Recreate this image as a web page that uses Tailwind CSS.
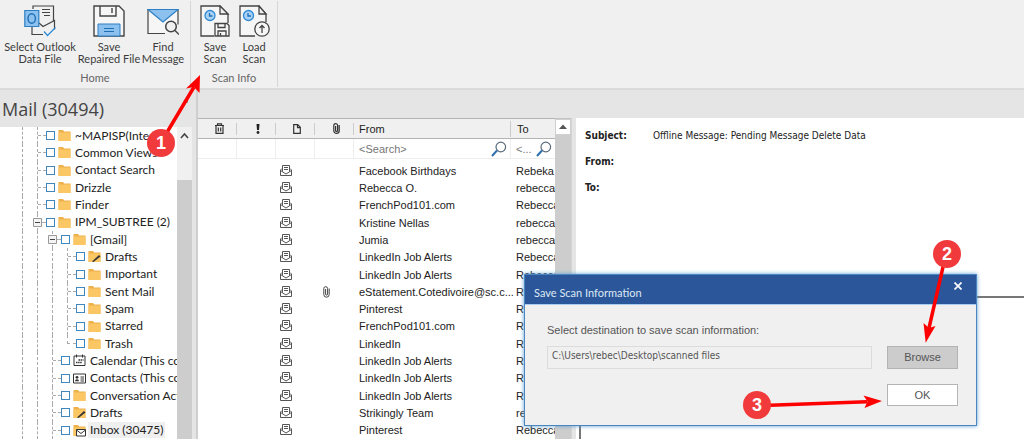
<!DOCTYPE html>
<html lang="en">
<head>
<meta charset="utf-8">
<meta name="viewport" content="width=device-width, initial-scale=1">
<title>Mail repair</title>
<script src="https://cdn.jsdelivr.net/npm/@tailwindcss/browser@4"></script>
</head>
<body class="relative flex h-screen flex-col overflow-hidden bg-[#e5e5e5] font-['Lato','Open_Sans',sans-serif] text-[#222]">

<!-- Ribbon -->
<header class="flex h-[90px] shrink-0 border-b-2 border-[#dadada] bg-[#f0f0f0] text-[11px] leading-3 text-[#3c3c3c]">
  <section class="flex w-[190px] flex-col items-center justify-between pt-[5px] pb-[2px]" aria-label="Home">
    <div class="flex w-full text-center whitespace-nowrap">
      <button class="flex w-[80px] flex-col items-center gap-1">
        <svg class="h-8 w-8" viewBox="0 0 32 32" fill="none" stroke="#444" stroke-width="1.2">
          <path d="M9 4V1h20.500v15M8 22v7.500h11M8 29.500V22" fill="none"/>
          <path d="M18 4.500h8M18 7.500h8M20 10.500h6" />
          <path d="M15 18l4 3.500 11.500-6v9" />
          <path d="M.8 5.500h14v16H.8z" fill="#8cc0ee" stroke="#2f7fc4"/>
          <ellipse cx="7.700" cy="13.500" rx="3.700" ry="4.800" stroke="#1f6fb5" stroke-width="1.400"/>
          <path d="M20 26.500l3.500 4 8-8" stroke="#2f8ad6" stroke-width="1.300"/>
        </svg>
        <span>Select Outlook<br>Data File</span>
      </button>
      <button class="flex w-[58px] flex-col items-center gap-1">
        <svg class="h-8 w-8" viewBox="0 0 32 32" fill="none" stroke="#444" stroke-width="1.400">
          <path d="M1 1h25l5 5v25H1z" fill="#f6f6f6"/>
          <path d="M7 1v10h16V1M19 3v5"/>
          <path d="M5 19h22v12H5z" fill="#8cc0ee" stroke="#2f7fc4" stroke-width="1"/>
          <path d="M11 23.500h10M11 26.500h10" stroke="#1f6fb5" stroke-width="1"/>
        </svg>
        <span>Save<br>Repaired File</span>
      </button>
      <button class="flex w-[50px] flex-col items-center gap-1">
        <svg class="h-8 w-8" viewBox="0 0 32 32" fill="none" stroke="#444" stroke-width="1.200">
          <path d="M18 28.500H1v-24h30v15" fill="#f6f6f6"/>
          <path d="M1 4.500h30L16 17z" fill="#8cc0ee" stroke="#2f7fc4"/>
          <circle cx="24" cy="21.500" r="5.300" fill="#f0f0f0" stroke-width="1.500"/>
          <path d="M28 25.500l4 4" stroke-width="1.500"/>
        </svg>
        <span>Find<br>Message</span>
      </button>
    </div>
    <h2 class="leading-4 text-[#666]">Home</h2>
  </section>
  <section class="my-px flex w-[88px] flex-col items-center justify-between border-x border-[#d6d6d6] pt-1 pb-px" aria-label="Scan Info">
    <div class="flex w-full justify-center text-center">
      <button class="flex w-[40px] flex-col items-center gap-1">
        <svg class="h-8 w-8" viewBox="0 0 32 32" fill="none" stroke="#444" stroke-width="1.300">
          <path d="M15 31H2V1h19l8 8v9" fill="#f6f6f6"/><path d="M21 1v8h8z" fill="#f0f0f0"/>
          <circle cx="11" cy="10.500" r="5" fill="#a9d2f5" stroke="#2f8ad6"/><path d="M10.500 8v3h3" stroke="#1f6fb5"/>
          <path d="M16 18.500h12l2 2V31H16z" fill="#f6f6f6"/><path d="M19 18.500v4h7v-4M19 31v-5h8v5M21.500 28v3"/>
        </svg>
        <span>Save<br>Scan</span>
      </button>
      <button class="flex w-[38px] flex-col items-center gap-1">
        <svg class="h-8 w-8" viewBox="0 0 32 32" fill="none" stroke="#444" stroke-width="1.300">
          <path d="M17 31H2V1h19l7 8v8" fill="#f6f6f6"/><path d="M21 1v8h7z" fill="#f0f0f0"/>
          <circle cx="10.500" cy="10.500" r="5" fill="#a9d2f5" stroke="#2f8ad6"/><path d="M10 8v3h3" stroke="#1f6fb5"/>
          <circle cx="24" cy="24" r="7.200" fill="#f6f6f6"/><path d="M24 28v-7.500M21.500 23l2.500-2.500 2.500 2.500"/>
        </svg>
        <span>Load<br>Scan</span>
      </button>
    </div>
    <h2 class="leading-4 text-[#666]">Scan Info</h2>
  </section>
</header>

<main class="flex min-h-0 flex-1">
  <!-- Folder pane -->
  <aside class="flex w-[198px] shrink-0 flex-col border-r-2 border-[#cfcfcf] pr-1">
    <div class="flex h-[37px] shrink-0 justify-between pr-1 pl-[2px]">
      <h1 class="font-['Open_Sans',sans-serif] text-[18px] leading-[38px] text-[#444]">Mail (30494)</h1>
      <button aria-label="Collapse folder pane" class="self-start pt-2"><svg class="h-[5px] w-[5px]" viewBox="0 0 5 5"><path d="M4.500 0v5L.5 2.500z" fill="#555"/></svg></button>
    </div>
    <div class="flex min-h-0 flex-1 bg-white">
      <ul id="tree" class="flex min-w-0 flex-1 flex-col overflow-hidden pl-[22px] text-[12px] leading-4 whitespace-nowrap"></ul>
      <div class="flex w-[15px] shrink-0 flex-col bg-[#f0f0f0]" aria-hidden="true">
        <svg class="h-[18px] w-full shrink-0" viewBox="0 0 15 18" fill="none" stroke="#444" stroke-width="1.600"><path d="M4 11l3.500-4 3.500 4"/></svg>
        <div class="mt-[35px] flex-1 bg-[#cdcdcd]"></div>
      </div>
    </div>
  </aside>

  <!-- Message list -->
  <section class="flex w-[374px] shrink-0 bg-[#e5e5e5] pt-7 font-['Liberation_Sans',sans-serif] text-[11px] leading-4">
    <table class="flex min-w-0 flex-1 flex-col bg-white text-left">
      <thead class="block shrink-0">
        <tr class="grid h-[21px] grid-cols-[repeat(4,39px)_157px_1fr] items-center border-y border-[#b4b4b4] bg-[#f0f0f0]">
          <th class="flex h-3 items-center justify-center border-r border-[#ccc] pl-1"><svg role="img" aria-label="Deleted" class="h-[11px] w-[11px]" viewBox="0 0 11 11" fill="none" stroke="#333" stroke-width="1.200"><path d="M1 2.500h9M3.500 2.500V.8h4v1.700M2 3v7.300h7V3M4.300 4.500v4M6.700 4.500v4"/></svg></th>
          <th class="flex h-3 items-center justify-center border-r border-[#ccc] pl-1"><svg role="img" aria-label="Importance" class="h-[10px] w-[4px]" viewBox="0 0 4 10" fill="#222"><path d="M.5 0h3L3 6H1z"/><circle cx="2" cy="8.500" r="1.400"/></svg></th>
          <th class="flex h-3 items-center justify-center border-r border-[#ccc] pl-1"><svg role="img" aria-label="Type" class="h-[10px] w-[8px]" viewBox="0 0 8 10" fill="none" stroke="#333" stroke-width="1.200"><path d="M.7.700h4L7.300 3.300v6H.7zM4.500 1v2.700h2.800"/></svg></th>
          <th class="flex h-3 items-center justify-center border-r border-[#ccc] pl-1"><svg role="img" aria-label="Attachment" class="h-[11px] w-[7px]" viewBox="0 0 7 11" fill="none" stroke="#333" stroke-width="1.200"><path d="M6.200 2v5.700a2.700 2.700 0 0 1-5.400 0V2.600a1.900 1.900 0 0 1 3.800 0v4.900a1 1 0 0 1-2 0V3"/></svg></th>
          <th class="h-4 border-r border-[#ccc] pl-[5px] font-normal">From</th>
          <th class="pl-[6px] font-normal">To</th>
        </tr>
        <tr class="grid h-5 grid-cols-[repeat(4,39px)_157px_1fr] border-b border-[#eee] text-[#777]">
          <td class="border-r border-[#eee]"></td><td class="border-r border-[#eee]"></td><td class="border-r border-[#eee]"></td><td class="border-r border-[#eee]"></td>
          <td class="flex items-center justify-between border-r border-[#eee] pr-[3px] pl-[5px]"><input aria-label="Search sender" placeholder="&lt;Search&gt;" class="w-[90px] placeholder-[#777] outline-none"><svg class="h-4 w-4" viewBox="0 0 16 16" fill="none"><circle cx="9.800" cy="6" r="4.800" stroke="#5a6b7c" stroke-width="1.200"/><path d="M6 9.500L1 15" stroke="#2f6fae" stroke-width="2"/></svg></td>
          <td class="flex items-center justify-between pr-[3px] pl-[5px]"><input aria-label="Search recipient" placeholder="&lt;..." class="w-5 placeholder-[#777] outline-none"><svg class="h-4 w-4" viewBox="0 0 16 16" fill="none"><circle cx="9.800" cy="6" r="4.800" stroke="#5a6b7c" stroke-width="1.200"/><path d="M6 9.500L1 15" stroke="#2f6fae" stroke-width="2"/></svg></td>
        </tr>
      </thead>
      <tbody id="mails" class="mt-[3px] flex min-h-0 flex-1 flex-col"></tbody>
    </table>
    <div class="flex w-4 shrink-0 flex-col border-t border-[#c4c4c4] bg-[#cdcdcd]" aria-hidden="true">
      <svg class="h-4 w-4 border border-[#d0d0d0] bg-white" viewBox="0 0 14 14"><path d="M3 9l4-4.500L11 9z" fill="#555"/></svg>
    </div>
    <div class="w-px bg-[#d4d4d4]"></div>
  </section>

  <!-- Message preview -->
  <article class="flex min-w-0 flex-1 flex-col pt-7 pl-1">
    <div class="flex flex-1 flex-col bg-white">
      <dl class="grid h-[178px] shrink-0 grid-cols-[68px_1fr] content-start gap-y-[10px] pt-[10px] pl-[9px] font-['DejaVu_Sans_Condensed','DejaVu_Sans',sans-serif] text-[10px] leading-4">
        <dt class="font-bold">Subject:</dt><dd>Offline Message: Pending Message Delete Data</dd>
        <dt class="font-bold">From:</dt><dd></dd>
        <dt class="font-bold">To:</dt><dd></dd>
      </dl>
      <div class="ml-[3px] flex-1 border-t-2 border-l-2 border-[#777]"></div>
    </div>
  </article>
</main>

<!-- Save dialog -->
<div role="dialog" aria-labelledby="dlg" class="absolute top-[274px] left-[524px] flex h-[152px] w-[453px] flex-col border border-[#4a86c0] bg-[#f0f0f0] font-['Liberation_Sans',sans-serif] text-[11px] text-[#555] shadow-[0_0_4px_#5a9bd4]">
  <div class="flex h-[30px] shrink-0 items-center justify-between border-b border-[#a8cdf0] bg-[#2b579a] pr-[13px] pl-[9px] text-white">
    <h2 id="dlg" class="pt-[6px] font-['Lato','Open_Sans',sans-serif] leading-4 text-[#dfe8f4]">Save Scan Information</h2>
    <button aria-label="Close" class="mb-[7px] p-px"><svg class="h-2 w-2" viewBox="0 0 8 8" stroke="#fff" stroke-width="1.700"><path d="M.5.500l7 7M7.500.500l-7 7"/></svg></button>
  </div>
  <form class="flex flex-col pt-[17px] pr-[18px] pl-[22px]">
    <label for="dest" class="leading-4">Select destination to save scan information:</label>
    <div class="mt-2 flex justify-between">
      <input id="dest" value="C:\Users\rebec\Desktop\scanned files" readonly class="h-[23px] w-[325px] border border-[#dcdcdc] px-1 pb-1 font-['DejaVu_Sans_Condensed','DejaVu_Sans',sans-serif] text-[10px] outline-none">
      <button type="button" class="h-[23px] w-[71px] border border-[#b4b4b4] bg-[#cccccc]">Browse</button>
    </div>
    <button type="button" class="mt-[15px] h-[22px] w-[71px] self-end border border-[#b4b4b4] bg-white">OK</button>
  </form>
</div>

<!-- Step markers -->
<svg class="pointer-events-none absolute top-0 left-0 h-[439px] w-[1024px]" viewBox="0 0 1024 439" fill="#fe0000" stroke="#fe0000">
  <g stroke-width="3.500"><path d="M166 134L194 87M943 267L929 328M770 405.300L867 401.700"/></g>
  <g stroke="none"><path d="M200 75L186 88.500l8-1.500 5.500 6zM925.700 342.700l-2.200-19.700 5.500 5 6.500-2zM882 401l-18.500-5.500 4 6-3 6.500z"/></g>
</svg>
<div class="absolute top-[129px] left-[147px] size-7 rounded-full bg-[#f13a3c] text-center font-['Liberation_Sans',sans-serif] text-[18px] leading-7 font-bold text-white">1</div>
<div class="absolute top-[240px] left-[933px] size-7 rounded-full bg-[#f13a3c] text-center font-['Liberation_Sans',sans-serif] text-[18px] leading-7 font-bold text-white">2</div>
<div class="absolute top-[391px] left-[743px] size-7 rounded-full bg-[#f13a3c] text-center font-['Liberation_Sans',sans-serif] text-[18px] leading-7 font-bold text-white">3</div>

<script>
const base = '<path d="M.5 1h4.500l1.200 1.500h6.300V12H.5z" fill="#eeb04a"/><path d="M.5 3.500h12V12H.5z" fill="#fbc765"/>';
const icons = {
  folder: base,
  draft: base + '<path d="M4 11.500L11 5l1.500 1.500-7 5.500z" fill="#333"/>',
  inbox: base + '<path d="M3.500 5.500h9V12h-9z" fill="#fff" stroke="#333"/><path d="M3.500 6l4.500 3.500L12.500 6" fill="none" stroke="#333"/>',
  cal: '<path d="M1 2h11v9.500H1zM3.500.500v3M9.500.500v3" fill="#fff" stroke="#333"/><path d="M5.500 6h5M3 8.500h6" stroke="#333" stroke-dasharray="1.500 .6" stroke-width="1.400"/>',
  card: '<path d="M.5 2h12v9H.5z" fill="#fff" stroke="#333"/><circle cx="4" cy="5.300" r="1.400" fill="#333"/><path d="M2 9.300a2 2 0 0 1 4 0z" fill="#333"/><path d="M7.500 5H11M7.500 7H11M7.500 9H11" stroke="#333"/>'
};
const tree = [
  [1,'folder','~MAPISP(Inter'],[1,'folder','Common Views'],[1,'folder','Contact Search'],[1,'folder','Drizzle'],[1,'folder','Finder'],
  [1,'folder','IPM_SUBTREE (2)','open'],[2,'folder','[Gmail]','open'],[3,'draft','Drafts'],[3,'folder','Important'],[3,'folder','Sent Mail'],
  [3,'folder','Spam'],[3,'folder','Starred'],[3,'folder','Trash','last'],[2,'cal','Calendar (This co'],[2,'card','Contacts (This co'],
  [2,'folder','Conversation Act'],[2,'draft','Drafts'],[2,'inbox','Inbox (30475)','sel']
];
const guide = '<span class="w-[15px] shrink-0 self-stretch border-l border-dashed border-[#aaa]"></span>';
const box = '<svg class="-ml-[5px] h-[9px] w-[9px] shrink-0" viewBox="0 0 9 9"><path d="M.5.500h8v8h-8z" fill="#f4f4f4" stroke="#999"/><path d="M2 4.500h5" stroke="#444"/></svg>';
document.getElementById('tree').innerHTML = tree.map(([lv, ic, name, st], i) => {
  const line = st === 'last'
    ? '<span class="h-1/2 w-[9px] shrink-0 self-start border-b border-l border-dashed border-[#aaa]"></span>'
    : '<span class="flex w-[9px] shrink-0 items-center self-stretch border-l border-dashed border-[#aaa]">' + (st === 'open' ? box : '') + '<span class="flex-1 border-t border-dashed border-[#aaa]"></span></span>';
  return '<li class="flex min-h-4 flex-1 items-center">' + guide.repeat(lv) + line +
    '<input type="checkbox" id="f' + i + '" class="size-[9px] shrink-0 appearance-none border border-[#3f87bd] bg-white">' +
    '<svg class="ml-[3px] h-[13px] w-[13px] shrink-0" viewBox="0 0 13 13">' + icons[ic] + '</svg>' +
    '<label for="f' + i + '" class="' + (st === 'sel' ? 'ml-[2px] bg-[#efefef] px-[2px]' : 'ml-1') + '">' + name + '</label></li>';
}).join('');

const mails = [
  ['Facebook Birthdays','Rebeka'],['Rebecca O.','rebecca'],['FrenchPod101.com','Rebecca'],['Kristine Nellas','rebecca'],['Jumia','rebecca'],
  ['LinkedIn Job Alerts','Rebecca'],['LinkedIn Job Alerts','Rebecca'],['eStatement.Cotedivoire@sc.c...','Rebecca',1],['Pinterest','Rebecca'],
  ['FrenchPod101.com','Rebecca'],['LinkedIn','Rebecca'],['LinkedIn Job Alerts','Rebecca'],['LinkedIn Job Alerts','Rebecca'],
  ['LinkedIn Job Alerts','Rebecca'],['Strikingly Team','rebecca'],['Pinterest','Rebecca']
];
const env = '<svg class="h-3 w-3" viewBox="0 0 12 12" fill="none" stroke="#555"><path d="M2 3.500L.5 5v5.500h11V5L10 3.500M.5 5.500L6 9l5.500-3.500M2.500 6.500v-6h7v6M4 2.500h4M4 4.500h4"/></svg>';
const clip = '<svg class="h-3 w-[7px]" viewBox="0 0 7 12" fill="none" stroke="#444"><path d="M6.200 2.500v6a2.700 2.700 0 0 1-5.400 0V2.600a1.900 1.900 0 0 1 3.800 0v5.500a1 1 0 0 1-2 0V3"/></svg>';
document.getElementById('mails').innerHTML = mails.map(([f, t, a]) =>
  '<tr class="grid min-h-4 flex-1 grid-cols-[repeat(4,39px)_157px_1fr] items-center whitespace-nowrap">' +
  '<td></td><td></td><td class="pl-1">' + env + '</td><td class="pl-2">' + (a ? clip : '') + '</td>' +
  '<td class="pl-[5px]">' + f + '</td><td class="overflow-hidden pl-[5px]">' + t + '</td></tr>').join('');
</script>
</body>
</html>
